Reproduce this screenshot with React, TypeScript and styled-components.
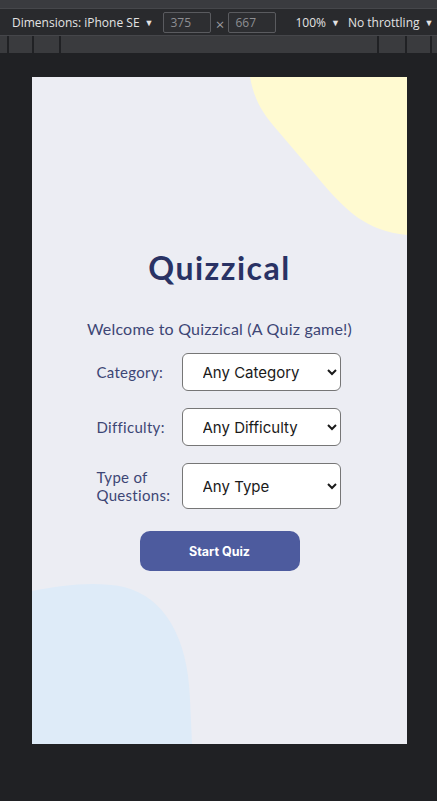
import React from 'react';
import styled, { createGlobalStyle } from 'styled-components';

const GlobalStyle = createGlobalStyle`
  html, body {
    margin: 0;
    padding: 0;
    background: #202124;
  }
  * {
    box-sizing: border-box;
  }
`;

const Shell = styled.div`
  width: 437px;
  height: 801px;
  overflow: hidden;
  background: #202124;
  font-family: 'Open Sans', 'Liberation Sans', sans-serif;
`;

const TopStrip = styled.div`
  height: 9px;
  background: #3a3b3f;
  border-bottom: 1px solid #46474b;
`;

const Toolbar = styled.div`
  height: 27px;
  background: #292a2d;
  border-bottom: 1px solid #45464a;
  display: flex;
  align-items: center;
  padding-left: 12px;
  color: #e3e3e3;
  font-size: 12px;
  white-space: nowrap;
`;

const ToolText = styled.span<{ $ml?: number }>`
  margin-left: ${(p) => p.$ml ?? 0}px;
  display: flex;
  align-items: center;
  gap: 5px;
`;

const Caret = styled.span`
  font-size: 9px;
`;

const SizeBox = styled.div<{ $ml?: number }>`
  margin-left: ${(p) => p.$ml ?? 0}px;
  width: 48px;
  height: 21px;
  border: 1px solid #5a5b5f;
  border-radius: 2px;
  background: #2d2e31;
  color: #8e8f93;
  padding-left: 6px;
  display: flex;
  align-items: center;
`;

const Times = styled.span`
  width: 17px;
  text-align: center;
  color: #9a9b9f;
  font-size: 15px;
  padding-top: 3px;
`;

const Ruler = styled.div`
  height: 17px;
  display: flex;
  gap: 2px;
  background: #202124;
`;

const RulerSeg = styled.div<{ $w?: number }>`
  background: #3a3b3e;
  ${(p) => (p.$w ? `width: ${p.$w}px;` : 'flex: 1;')}
`;

const Stage = styled.div`
  padding: 24px 0 0 32px;
`;

const Viewport = styled.div`
  position: relative;
  width: 375px;
  height: 667px;
  background: #ecedf3;
  overflow: hidden;
  font-family: Lato, 'Open Sans', sans-serif;
`;

const Blob = styled.svg`
  position: absolute;
  inset: 0;
  width: 375px;
  height: 667px;
  pointer-events: none;
`;

const Content = styled.main`
  position: relative;
  display: flex;
  flex-direction: column;
  align-items: center;
  padding-top: 169px;
`;

const Title = styled.h1`
  margin: 0;
  font-size: 32px;
  font-weight: 700;
  letter-spacing: 1.5px;
  color: #293264;
  line-height: 44px;
`;

const Welcome = styled.p`
  margin: 29px 0 0;
  font-size: 16px;
  color: #3d4675;
  letter-spacing: 0.2px;
`;

const Form = styled.form`
  margin-top: 15px;
  display: flex;
  flex-direction: column;
  align-items: center;
  gap: 17px;
`;

const Row = styled.div`
  display: flex;
  align-items: stretch;
  gap: 6px;
  margin-left: -2px;
`;

const Label = styled.label`
  width: 79px;
  display: flex;
  align-items: center;
  padding: 5px 0;
  font-size: 15px;
  line-height: 18px;
  color: #3d4675;
  letter-spacing: 0.3px;
`;

const Select = styled.select`
  width: 159px;
  min-height: 38px;
  padding: 0 6px 0 16px;
  border: 1px solid #767676;
  border-radius: 6px;
  background: #ffffff;
  font-family: Inter, Roboto, sans-serif;
  font-size: 15px;
  color: #1a1a1a;
`;

const StartButton = styled.button`
  margin-top: 5px;
  width: 160px;
  height: 40px;
  border: none;
  border-radius: 10px;
  background: #4d5b9e;
  color: #ffffff;
  font-family: Inter, Roboto, sans-serif;
  font-weight: 700;
  font-size: 12.5px;
`;

const fields = [
  { id: 'category', label: 'Category:', option: 'Any Category' },
  { id: 'difficulty', label: 'Difficulty:', option: 'Any Difficulty' },
  { id: 'type', label: 'Type of Questions:', option: 'Any Type' },
];

export default function App() {
  return (
    <Shell>
      <GlobalStyle />
      <TopStrip />
      <Toolbar>
        <ToolText>
          Dimensions: iPhone SE <Caret>▼</Caret>
        </ToolText>
        <SizeBox $ml={10}>375</SizeBox>
        <Times>×</Times>
        <SizeBox>667</SizeBox>
        <ToolText $ml={19}>
          100% <Caret>▼</Caret>
        </ToolText>
        <ToolText $ml={8}>
          No throttling <Caret>▼</Caret>
        </ToolText>
      </Toolbar>
      <Ruler>
        <RulerSeg $w={7} />
        <RulerSeg $w={23} />
        <RulerSeg $w={25} />
        <RulerSeg />
        <RulerSeg $w={26} />
        <RulerSeg $w={23} />
        <RulerSeg $w={5} />
      </Ruler>
      <Stage>
        <Viewport>
          <Blob viewBox="0 0 375 667">
            <path
              d="M218 0 C222 22 230 36 246 54 L292 108 C314 133 334 154 375 158 L375 0 Z"
              fill="#fffad1"
            />
            <path
              d="M0 514 C32 508 62 504 92 510 C132 520 156 560 158 622 L160 667 L0 667 Z"
              fill="#deebf8"
            />
          </Blob>
          <Content>
            <Title>Quizzical</Title>
            <Welcome>Welcome to Quizzical (A Quiz game!)</Welcome>
            <Form>
              {fields.map((f) => (
                <Row key={f.id}>
                  <Label htmlFor={f.id}>{f.label}</Label>
                  <Select id={f.id} defaultValue="">
                    <option value="">{f.option}</option>
                  </Select>
                </Row>
              ))}
              <StartButton type="button">Start Quiz</StartButton>
            </Form>
          </Content>
        </Viewport>
      </Stage>
    </Shell>
  );
}
